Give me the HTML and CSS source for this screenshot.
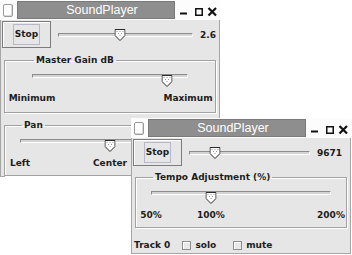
FILE: index.html
```html
<!DOCTYPE html>
<html lang="en">
<head>
    <meta charset="UTF-8">
    <meta name="viewport" content="width=device-width, initial-scale=1.0">
    <title>SoundPlayer</title>
    <link rel="stylesheet" href="styles.css">
</head>
<body>
    <div class="desk">
        <!-- main player window -->
        <div class="window win-main">
            <div class="titlebar">
                <span class="menu-box"></span>
                <span class="title">SoundPlayer</span>
                <svg class="controls" width="40" height="20" viewBox="0 0 40 20">
                    <rect x="0" y="12.5" width="7" height="2" fill="#111"/>
                    <rect x="15.75" y="8.75" width="6.5" height="6.5" fill="none" stroke="#111" stroke-width="1.5"/>
                    <path d="M28.5 8L36 15.5M36 8L28.5 15.5" stroke="#111" stroke-width="2.2"/>
                </svg>
            </div>
            <div class="content">
                <div class="row">
                    <button class="btn"><span class="focus">Stop</span></button>
                    <div class="slider">
                        <div class="track"></div>
                        <svg class="thumb" style="left: 45.6%" width="11" height="12" viewBox="0 0 11 12">
                            <path d="M0.5 0.5H10.5V6.5L5.5 11.5L0.5 6.5Z" fill="#fff" stroke="#2a2a2a"/>
                            <path d="M2 2h1v1H2zM5 2h1v1H5zM8 2h1v1H8zM3.5 4h1v1h-1zM6.5 4h1v1h-1zM5 6h1v1H5z" fill="#9a9a9a"/>
                        </svg>
                    </div>
                    <span class="value">2.6</span>
                </div>

                <fieldset class="group">
                    <legend>Master Gain dB</legend>
                    <div class="slider">
                        <div class="track"></div>
                        <svg class="thumb" style="left: 86.5%" width="11" height="12" viewBox="0 0 11 12">
                            <path d="M0.5 0.5H10.5V6.5L5.5 11.5L0.5 6.5Z" fill="#fff" stroke="#2a2a2a"/>
                            <path d="M2 2h1v1H2zM5 2h1v1H5zM8 2h1v1H8zM3.5 4h1v1h-1zM6.5 4h1v1h-1zM5 6h1v1H5z" fill="#9a9a9a"/>
                        </svg>
                    </div>
                    <div class="ticks">
                        <span style="left: 0%">Minimum</span>
                        <span style="left: 100%">Maximum</span>
                    </div>
                </fieldset>

                <fieldset class="group pan">
                    <legend>Pan</legend>
                    <div class="slider">
                        <div class="track"></div>
                        <svg class="thumb" style="left: 50%" width="11" height="12" viewBox="0 0 11 12">
                            <path d="M0.5 0.5H10.5V6.5L5.5 11.5L0.5 6.5Z" fill="#fff" stroke="#2a2a2a"/>
                            <path d="M2 2h1v1H2zM5 2h1v1H5zM8 2h1v1H8zM3.5 4h1v1h-1zM6.5 4h1v1h-1zM5 6h1v1H5z" fill="#9a9a9a"/>
                        </svg>
                    </div>
                    <div class="ticks">
                        <span style="left: 0%">Left</span>
                        <span style="left: 50%">Center</span>
                        <span style="left: 100%">Right</span>
                    </div>
                </fieldset>
            </div>
        </div>

        <!-- tempo window -->
        <div class="window win-tempo">
            <div class="titlebar">
                <span class="menu-box"></span>
                <span class="title">SoundPlayer</span>
                <svg class="controls" width="40" height="20" viewBox="0 0 40 20">
                    <rect x="0" y="12.5" width="7" height="2" fill="#111"/>
                    <rect x="15.75" y="8.75" width="6.5" height="6.5" fill="none" stroke="#111" stroke-width="1.5"/>
                    <path d="M28.5 8L36 15.5M36 8L28.5 15.5" stroke="#111" stroke-width="2.2"/>
                </svg>
            </div>
            <div class="content">
                <div class="row">
                    <button class="btn"><span class="focus">Stop</span></button>
                    <div class="slider">
                        <div class="track"></div>
                        <svg class="thumb" style="left: 21.5%" width="11" height="12" viewBox="0 0 11 12">
                            <path d="M0.5 0.5H10.5V6.5L5.5 11.5L0.5 6.5Z" fill="#fff" stroke="#2a2a2a"/>
                            <path d="M2 2h1v1H2zM5 2h1v1H5zM8 2h1v1H8zM3.5 4h1v1h-1zM6.5 4h1v1h-1zM5 6h1v1H5z" fill="#9a9a9a"/>
                        </svg>
                    </div>
                    <span class="value wide">9671</span>
                </div>

                <fieldset class="group tempo">
                    <legend>Tempo Adjustment (%)</legend>
                    <div class="slider">
                        <div class="track"></div>
                        <svg class="thumb" style="left: 33.3%" width="11" height="12" viewBox="0 0 11 12">
                            <path d="M0.5 0.5H10.5V6.5L5.5 11.5L0.5 6.5Z" fill="#fff" stroke="#2a2a2a"/>
                            <path d="M2 2h1v1H2zM5 2h1v1H5zM8 2h1v1H8zM3.5 4h1v1h-1zM6.5 4h1v1h-1zM5 6h1v1H5z" fill="#9a9a9a"/>
                        </svg>
                    </div>
                    <div class="ticks">
                        <span style="left: 0%">50%</span>
                        <span style="left: 33.3%">100%</span>
                        <span style="left: 100%">200%</span>
                    </div>
                </fieldset>

                <div class="track-row">
                    <span>Track 0</span>
                    <label class="check"><span class="box"></span>solo</label>
                    <label class="check"><span class="box"></span>mute</label>
                </div>
            </div>
        </div>
    </div>
</body>
</html>
```

FILE: styles.css
```css
/* page */
body {
    margin: 0;
    background-color: #fff;
    font-family: "DejaVu Sans", sans-serif;
    font-size: 9px;
    font-weight: bold;
    color: #1c1c1c;
}

.desk {
    position: relative;
    width: 352px;
    height: 255px;
    overflow: hidden;
}

/* windows */
.window {
    position: absolute;
    width: 220px;
    display: flex;
    flex-direction: column;
    background-color: #fcfcfc;
}

.win-main {
    left: 0;
    top: 0;
    height: 169px;
}

.win-tempo {
    left: 131px;
    top: 118px;
    height: 136px;
}

/* title bar */
.titlebar {
    height: 20px;
    display: flex;
    align-items: flex-start;
    flex-shrink: 0;
}

.menu-box {
    width: 10px;
    height: 13px;
    margin: 4px 0 0 3px;
    box-sizing: border-box;
    border: 1px solid #9a9a9a;
    border-radius: 2px;
    background-color: #fff;
    box-shadow: inset -1px -1px 0 #d8d8d8;
}

.title {
    width: 158px;
    height: 18px;
    margin: 1px 0 0 4px;
    box-sizing: border-box;
    padding-left: 12px;
    border: 1px solid #7a7a7a;
    background-color: #8e8e8e;
    color: #fff;
    font: 12.5px "Liberation Sans", sans-serif;
    line-height: 16px;
    text-align: center;
}

.controls {
    margin-left: 5px;
}

/* window body */
.content {
    flex: 1;
    background-color: #e6e6e6;
    border: 1px solid #a6a6a6;
    border-top: none;
    padding: 1px 2px 0 1px;
}

.row {
    display: flex;
    align-items: center;
    height: 27px;
}

.btn {
    width: 49px;
    height: 27px;
    padding: 0;
    display: flex;
    justify-content: center;
    align-items: center;
    border: 1px solid #7c7c7c;
    background-color: #e6e6e6;
    box-shadow: inset 1px 1px 0 #fff;
    font: inherit;
    color: inherit;
}

.focus {
    padding: 4px 1px;
    line-height: 11px;
    border: 1px solid #b8b8c8;
}

/* sliders */
.slider {
    position: relative;
    height: 14px;
}

.row .slider {
    flex: 1;
    margin-left: 7px;
}

.track {
    margin-top: 5px;
    height: 2px;
    border: 1px solid #8c8c8c;
    border-right-color: #fff;
    border-bottom-color: #fff;
    background-color: #d4d4d4;
}

.thumb {
    position: absolute;
    top: 1px;
    transform: translateX(-50%);
}

.value {
    margin-left: 7px;
    padding-right: 1px;
}

.value.wide {
    padding-right: 6px;
}

/* titled groups */
.group {
    margin: 7px 1px 0 2px;
    padding: 3px 27px 8px;
    border: 1px solid #a2a2a2;
    box-shadow: inset 1px 1px 0 #fff, 1px 1px 0 #fff;
}

.group legend {
    margin-left: 2px;
    padding: 0 2px;
    line-height: 11px;
}

.pan {
    padding: 3px 15px 6px;
}

.tempo {
    margin: 6px 1px 0 2px;
    padding: 3px 15px 6px;
}

.ticks {
    position: relative;
    height: 11px;
    margin-top: 5px;
    line-height: 11px;
}

.ticks span {
    position: absolute;
    top: 0;
    transform: translateX(-50%);
    white-space: nowrap;
}

/* track options */
.track-row {
    display: flex;
    align-items: center;
    margin: 12px 0 0 1px;
    line-height: 11px;
}

.check {
    display: flex;
    align-items: center;
    margin-left: 12px;
}

.check + .check {
    margin-left: 17px;
}

.box {
    width: 9px;
    height: 9px;
    margin-right: 4px;
    box-sizing: border-box;
    border: 1px solid #8e8e8e;
    background-color: #e8e8e8;
    box-shadow: inset 1px 1px 0 #fff;
}
```
